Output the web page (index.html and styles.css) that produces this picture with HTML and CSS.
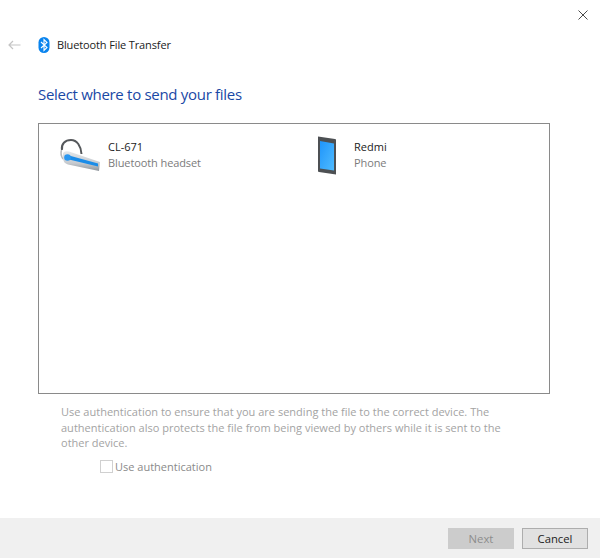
FILE: index.html
```html
<!DOCTYPE html>
<html lang="en">
<head>
<meta charset="utf-8">
<title>Bluetooth File Transfer</title>
<link rel="stylesheet" href="styles.css">
</head>
<body>
<div class="dialog">
  <div class="close-row">
    <svg class="close-icon" width="10" height="10" viewBox="0 0 10 10"><path d="M0.5 0.5L9.5 9.5M9.5 0.5L0.5 9.5" stroke="#4a4a4a" stroke-width="1" fill="none"/></svg>
  </div>
  <div class="title-row">
    <svg class="back-icon" width="13" height="10" viewBox="0 0 13 10"><path d="M12.5 5H1M5 1L1 5L5 9" stroke="#c4c4c4" stroke-width="1.2" fill="none"/></svg>
    <svg class="bt-icon" width="12" height="16" viewBox="0 0 12 16"><rect x="0.5" y="0" width="11" height="16" rx="5.5" fill="#0a84ee"/><path d="M3 5L9 10.5L6 13.5V2.5L9 5.5L3 11" stroke="#fff" stroke-width="1.1" fill="none"/></svg>
    <span class="title">Bluetooth File Transfer</span>
  </div>
  <h1 class="heading">Select where to send your files</h1>
  <div class="device-list">
    <div class="device">
      <svg class="device-icon" width="44" height="36" viewBox="0 0 44 36">
        <defs>
          <linearGradient id="hs" x1="0" y1="0" x2="0" y2="1"><stop offset="0" stop-color="#e4e7ea"/><stop offset="0.6" stop-color="#c6cacf"/><stop offset="1" stop-color="#8f959b"/></linearGradient>
        </defs>
        <path d="M4 13C3 7 7 3 13 3C19 3 23 9 23.500 17" stroke="#55585b" stroke-width="2" fill="none"/>
        <path d="M5 22C3 19 2.500 16 3.500 13" stroke="#b4b8bc" stroke-width="1.500" fill="none"/>
        <path d="M5 16Q7 13 14 15.500L42 25L41 34L10 27.500Q5 26 5 21Z" fill="url(#hs)"/>
        <path d="M11 18.500L40 26.500L40 29.500L11 22.500Z" fill="#1a8ce8"/>
        <circle cx="9.500" cy="20.500" r="3.300" fill="#2a97f0"/>
      </svg>
      <div class="device-text device-text-wide">
        <div class="device-name">CL-671</div>
        <div class="device-type">Bluetooth headset</div>
      </div>
    </div>
    <div class="device">
      <svg class="device-icon" width="18" height="39" viewBox="0 0 18 39">
        <defs>
          <linearGradient id="sc" x1="0" y1="0" x2="1" y2="1"><stop offset="0" stop-color="#1f95fb"/><stop offset="1" stop-color="#4fbbff"/></linearGradient>
        </defs>
        <path d="M0 0.500L17 3Q18 3 18 4V38.500L1 36Q0 36 0 35Z" fill="#4d5053"/>
        <path d="M2 5L16 7.500V34.500L2 32.500Z" fill="url(#sc)"/>
      </svg>
      <div class="device-text">
        <div class="device-name">Redmi</div>
        <div class="device-type">Phone</div>
      </div>
    </div>
  </div>
  <p class="auth-note">Use authentication to ensure that you are sending the file to the correct device. The authentication also protects the file from being viewed by others while it is sent to the other device.</p>
  <label class="auth-check"><span class="checkbox"></span><span>Use authentication</span></label>
  <div class="footer">
    <button class="btn btn-disabled" disabled>Next</button>
    <button class="btn">Cancel</button>
  </div>
</div>
</body>
</html>
```
FILE: styles.css
```css
* { box-sizing: border-box; }
html, body { margin: 0; padding: 0; background: #fff; }
body { font-family: "Open Sans", "Noto Sans", sans-serif; font-size: 12px; color: #1a1a1a; }
.dialog { width: 600px; height: 558px; display: flex; flex-direction: column; overflow: hidden; }
.close-row { display: flex; justify-content: flex-end; padding: 10px 12px 0 0; height: 36px; }
.close-icon { display: block; }
.title-row { display: flex; align-items: center; height: 17px; padding-left: 8px; }
.back-icon { margin-right: 17px; }
.bt-icon { margin-right: 7px; }
.title { font-size: 11px; letter-spacing: -0.13px; color: #222; }
.heading { margin: 30px 0 0 38px; font-size: 15px; letter-spacing: -0.3px; line-height: 22px; font-weight: 400; color: #1a48a5; }
.device-list { margin: 18px 0 0 38px; width: 512px; height: 271px; border: 1px solid #8a8a8a; display: grid; grid-template-columns: 260px 1fr; align-content: start; padding: 10px 0 0 19px; }
.device { display: flex; align-items: center; height: 42px; }
.device-icon { flex: none; }
.device-text { margin-left: 18px; line-height: 16px; }
.device-text-wide { margin-left: 6px; }
.device-name { font-size: 11px; color: #222; }
.device-type { font-size: 11px; letter-spacing: -0.1px; color: #7b7b7b; }
.auth-note { margin: 10px 0 0 61px; width: 450px; font-size: 11px; letter-spacing: 0.01px; line-height: 15.5px; color: #a3a3a3; }
.auth-check { display: flex; align-items: center; margin: 9px 0 0 100px; height: 14px; color: #8a8a8a; font-size: 11px; }
.checkbox { width: 13px; height: 13px; border: 1px solid #d0d0d0; margin-right: 2px; }
.footer { margin-top: auto; height: 40px; background: #f0f0f0; display: flex; justify-content: flex-end; align-items: center; gap: 8px; padding: 0 12px 0 0; }
.btn { width: 66px; height: 21px; padding: 0; font: inherit; font-size: 11.3px; background: #e1e1e1; border: 1px solid #adadad; color: #222; }
.btn-disabled { background: #cccccc; border-color: #cccccc; color: #8c8c8c; }
```
